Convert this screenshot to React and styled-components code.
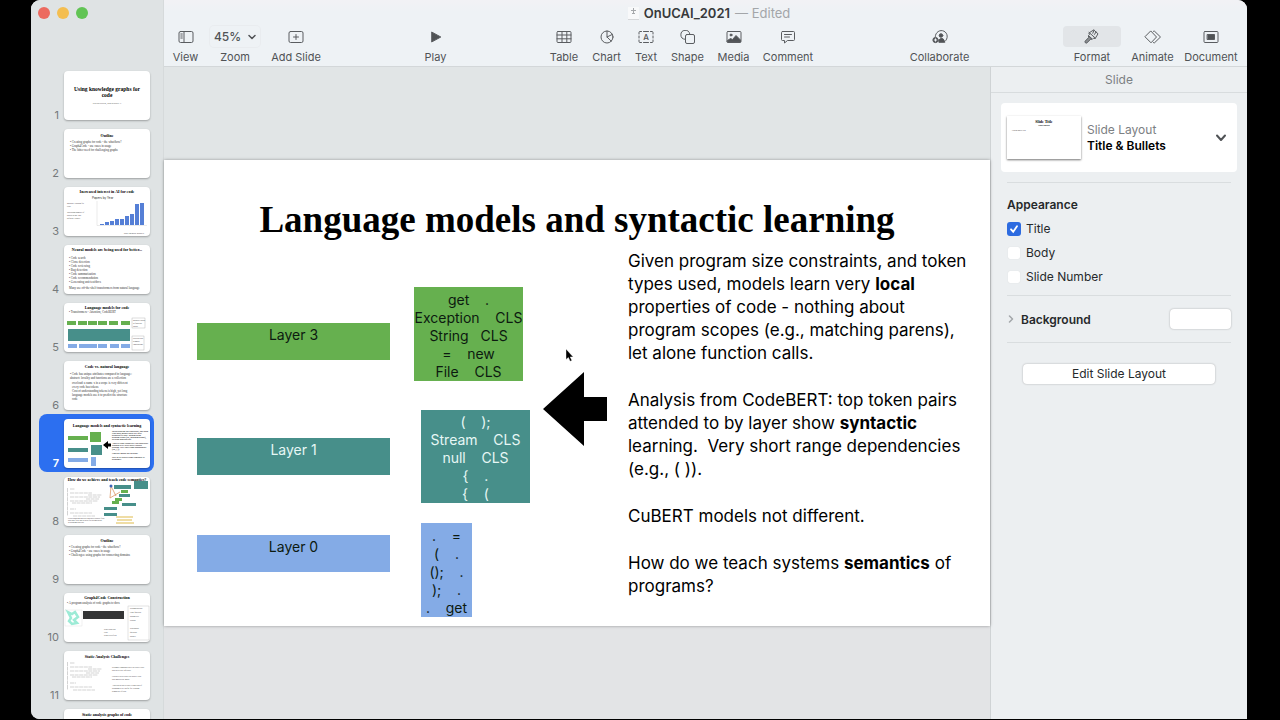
import React, { useState } from 'react'
import styled, { createGlobalStyle } from 'styled-components'

const GlobalStyle = createGlobalStyle`
    * {
        box-sizing: border-box;
    }
    body {
        margin: 0;
        background: #000;
        font-family: Inter, "Liberation Sans", sans-serif;
        font-size: 12px;
        color: #26292b;
    }
    button, input {
        font: inherit;
        color: inherit;
    }
`
const Window = styled.div`
    display: flex;
    height: 100vh;
    margin: 0 33px 0 31px;
    border-bottom: 1px solid #000;
    border-radius: 9px 9px 0 9px;
    background: #dfe3e4;
    overflow: hidden;
`
const Sidebar = styled.nav`
    width: 133px;
    flex: none;
    display: flex;
    flex-direction: column;
    background: #dfe3e4;
    border-right: 1px solid #d6dadb;
    overflow: hidden;
`
const Lights = styled.div`
    display: flex;
    gap: 7px;
    padding: 7px 0 0 7px;
    height: 66px;
    flex: none;
`
const Light = styled.button`
    width: 12px;
    height: 12px;
    padding: 0;
    border: none;
    border-radius: 50%;
    background: ${props => props.$color};
`
const ThumbList = styled.ol`
    list-style: none;
    margin: 0;
    padding: 0 9px 0 8px;
`
const ThumbButton = styled.button`
    display: flex;
    align-items: flex-end;
    justify-content: flex-end;
    gap: 5px;
    width: 100%;
    height: 58px;
    padding: 5px 4px 4px;
    border: none;
    border-radius: 8px;
    background: ${props => props.$active ? '#2c6ff0' : 'transparent'};
    color: ${props => props.$active ? '#fff' : '#75797b'};
    font-weight: ${props => props.$active ? 600 : 400};
    font-size: 11px;
    line-height: 10px;
`
const Thumb = styled.span`
    display: block;
    width: 86px;
    height: 49px;
    border-radius: 4px;
    background: #fff;
    box-shadow: 0 1px 2px rgba(0, 0, 0, .3);
    overflow: hidden;
    svg {
        display: block;
    }
`
const Main = styled.div`
    flex: 1;
    min-width: 0;
    display: flex;
    flex-direction: column;
`
const Header = styled.header`
    height: 67px;
    flex: none;
    background: linear-gradient(#f2f2f5, #eef2f5 12px);
    border-bottom: 1px solid #d3d7d9;
`
const DocTitle = styled.h1`
    display: flex;
    justify-content: center;
    align-items: center;
    gap: 5px;
    height: 26px;
    margin: 0;
    padding-left: 7px;
    font-size: 13px;
    font-weight: 600;
    color: #37393b;
    span {
        font-weight: 400;
        color: #a3a6a9;
    }
`
const Toolbar = styled.div`
    display: flex;
    padding: 0 9px;
`
const Tools = styled.div`
    display: flex;
    gap: ${props => props.$gap || 16}px;
`
const Spacer = styled.div`
    flex: ${props => props.$grow} 1 0;
`
const Tool = styled.button`
    display: flex;
    flex-direction: column;
    align-items: center;
    gap: 2px;
    width: ${props => props.$w}px;
    padding: 0;
    border: none;
    background: none;
    color: #505356;
    font-size: 11px;
    line-height: 16px;
    white-space: nowrap;
`
const Face = styled.span`
    display: flex;
    align-items: center;
    justify-content: center;
    gap: 7px;
    width: 100%;
    height: 21px;
    border-radius: 4px;
    font-size: 12px;
    font-weight: 500;
    background: ${props => props.$on ? '#e2e5e8' : 'transparent'};
    box-shadow: ${props => props.$framed ? '0 0 0 1px #e9ecef' : 'none'};
    svg {
        flex: none;
    }
`
const Workspace = styled.div`
    flex: 1;
    min-height: 0;
    display: flex;
`
const Canvas = styled.main`
    flex: 1;
    min-width: 0;
    display: flex;
    flex-direction: column;
    justify-content: center;
    background: linear-gradient(#e1e5e6 50%, #e3e4e6 80%);
`
const Slide = styled.article`
    position: relative;
    min-height: 466px;
    padding-top: 39px;
    background: #fff;
    box-shadow: 0 0 3px rgba(0, 0, 0, .35);
    color: #000;
`
const SlideTitle = styled.h2`
    margin: 0;
    height: 51px;
    text-align: center;
    white-space: nowrap;
    font-family: "Liberation Serif", serif;
    font-size: 37px;
    line-height: 42px;
    font-weight: 700;
`
const SlideBody = styled.div`
    display: flex;
    flex-direction: column;
    gap: 24px;
    padding-left: 464px;
    font-size: 17px;
    line-height: 23px;
    white-space: pre;
    p {
        margin: 0;
    }
`
/* a shape that the author dropped somewhere on the slide */
const Shape = styled.div`
    position: absolute;
    left: ${props => props.$x}px;
    top: ${props => props.$y}px;
    width: ${props => props.$w}px;
    height: ${props => props.$h}px;
    padding-top: ${props => props.$pad || 3}px;
    background: ${props => props.$fill};
    color: ${props => props.$ink || '#0c1a10'};
    font-size: 14px;
    line-height: 18px;
    text-align: center;
    white-space: pre;
`
const Arrow = styled.svg`
    position: absolute;
    left: 379px;
    top: 211px;
`
const Pointer = styled.svg`
    position: absolute;
    left: 401px;
    top: 188px;
`
const Inspector = styled.aside`
    width: 257px;
    flex: none;
    background: #eceff1;
    border-left: 1px solid #cfd3d5;
`
const InspectorTitle = styled.h2`
    margin: 0;
    height: 26px;
    border-bottom: 1px solid #d8dcde;
    text-align: center;
    font-size: 12px;
    line-height: 26px;
    font-weight: 400;
    color: #7c8083;
`
const LayoutCard = styled.button`
    display: flex;
    align-items: center;
    gap: 6px;
    width: calc(100% - 20px);
    height: 69px;
    margin: 10px;
    padding: 0 10px 0 6px;
    border: none;
    border-radius: 4px;
    background: #fff;
    text-align: left;
    line-height: 16px;
`
const LayoutPreview = styled.span`
    width: 74px;
    height: 43px;
    background: #fff;
    box-shadow: 0 1px 2px rgba(0, 0, 0, .55);
    svg {
        display: block;
    }
`
const LayoutName = styled.span`
    flex: 1;
    color: #7c8083;
    strong {
        display: block;
        font-weight: 600;
        color: #000;
    }
`
const Section = styled.section`
    margin: 0 16px;
    border-top: 1px solid #d9dddf;
`
const Appearance = styled.fieldset`
    display: flex;
    flex-direction: column;
    gap: 8px;
    margin: 0;
    padding: 14px 0 10px;
    border: none;
    line-height: 16px;
    legend {
        float: left;
        padding: 0;
        font-weight: 600;
    }
`
const Check = styled.label`
    display: flex;
    align-items: center;
    gap: 6px;
    padding-left: 1px;
`
const Box = styled.input`
    appearance: none;
    width: 12px;
    height: 12px;
    margin: 0;
    border-radius: 2px;
    background: #fff;
    box-shadow: 0 0 1px rgba(0, 0, 0, .15);
    &:checked {
        background: #2d6be0 url("data:image/svg+xml,%3Csvg xmlns='http://www.w3.org/2000/svg' viewBox='0 0 12 12'%3E%3Cpath d='M3 6.3l2.2 2.4L9 3.2' fill='none' stroke='white' stroke-width='1.8' stroke-linecap='round'/%3E%3C/svg%3E");
        box-shadow: 0 0 0 1px #2d6be0;
    }
`
const BackgroundRow = styled.div`
    display: flex;
    align-items: center;
    justify-content: space-between;
    height: 46px;
`
const Disclosure = styled.button`
    display: flex;
    align-items: center;
    gap: 7px;
    padding: 0 0 0 1px;
    border: none;
    background: none;
    font-weight: 600;
`
const PushButton = styled.button`
    width: ${props => props.$w};
    height: 20px;
    padding: 0;
    border: none;
    border-radius: 4px;
    background: #fff;
    box-shadow: 0 0 2px rgba(0, 0, 0, .3);
    line-height: 20px;
`
const EditRow = styled.div`
    padding: 21px 16px;
`

const green = '#66b04f'
const teal = '#478f8a'
const blue = '#84abe6'

const Icon = ({ w = 16, h = 14, children }) => (
    <svg width={w} height={h} viewBox={`0 0 ${w} ${h}`} fill="none" stroke="#5a5d60" strokeWidth="1" strokeLinecap="round" strokeLinejoin="round" aria-hidden="true">
        {children}
    </svg>
)
const Chevron = ({ w, h, d, color, weight }) => (
    <svg width={w} height={h} viewBox={`0 0 ${w} ${h}`} fill="none" stroke={color} strokeWidth={weight} strokeLinecap="round" strokeLinejoin="round" aria-hidden="true">
        <path d={d} />
    </svg>
)

const icons = {
    view: <Icon><rect x="1" y="1.5" width="14" height="11" rx="1.5" /><path d="M6 1.5v11M2.8 4h1.5M2.8 6h1.5M2.8 8h1.5" /></Icon>,
    add: <Icon><rect x="1" y="1.5" width="14" height="11" rx="1.5" /><path d="M8 4.5v5M5.5 7h5" /></Icon>,
    play: <Icon w={12} h={12}><path d="M2 1.2L10.8 6 2 10.8z" fill="#505356" /></Icon>,
    table: <Icon><rect x="1" y="1.5" width="14" height="11" rx="1" /><path d="M1 5h14M1 8.8h14M6 1.5v11M10.8 1.5v11" /></Icon>,
    chart: <Icon><circle cx="8" cy="7" r="6" /><path d="M8 1v6l4.3 4.2M8 7l5.4-2.6" /></Icon>,
    text: (
        <Icon>
            <path d="M1 4V2.500a1 1 0 0 1 1-1h1.500M12.500 1.500H14a1 1 0 0 1 1 1V4M15 10v1.500a1 1 0 0 1-1 1h-1.500M3.500 12.500H2a1 1 0 0 1-1-1V10M5.500 1.500h5M5.500 12.500h5M1 6v2M15 6v2" />
            <text x="8" y="10" textAnchor="middle" fontSize="8" fill="#505356" stroke="none">A</text>
        </Icon>
    ),
    shape: <Icon><path d="M5 9.300A4.500 4.500 0 1 1 9.800 4" /><rect x="5.500" y="4.500" width="9" height="9" rx="1.500" /></Icon>,
    media: (
        <Icon>
            <rect x="1" y="1.500" width="14" height="11" rx="1" />
            <circle cx="5" cy="5" r="1" fill="#505356" />
            <path d="M1.500 10.500l3-2 2 1L10 5.500l4.500 4.500v2h-13z" fill="#505356" />
        </Icon>
    ),
    comment: <Icon><path d="M2.500 1.500h11a1 1 0 0 1 1 1v7a1 1 0 0 1-1 1H7.500L4.500 13v-2.500h-2a1 1 0 0 1-1-1v-7a1 1 0 0 1 1-1zM4.500 4.500h7M4.500 7h5" /></Icon>,
    collab: (
        <Icon>
            <path d="M3.300 6.500A6 6 0 1 1 13 11.300" />
            <circle cx="9" cy="5.500" r="1.800" fill="#505356" />
            <path d="M6.800 12a2.600 2.600 0 0 1 5.400-1.500l.5 1.500z" fill="#505356" />
            <circle cx="3.500" cy="10" r="2.600" fill="#505356" />
            <path d="M3.500 8.800v2.400M2.300 10h2.400" stroke="#eef2f5" />
        </Icon>
    ),
    format: (
        <Icon h={15}>
            <path d="M10 1.200l4 3.600-3 5-1.200-.9-1.300 1.300-4-3.600 1.200-1.400-.7-.8z" />
            <path d="M5 3.400l6.200 5.600M10 1.200l-1.200 3M12 3l-1.500 2.400" />
            <path d="M4.700 7.200l3.200 3-1.600.3-3.200 3.200a1.200 1.200 0 0 1-1.800-1.700l3.100-3.200z" fill="#8b8e91" />
        </Icon>
    ),
    animate: <Icon w={18} h={14}><path d="M7 1.200L12.500 7 7 12.800 1.200 7z" /><path d="M9.500 1.300l1-.1L16.500 7l-6 5.800-1-.2" /></Icon>,
    document: <Icon><rect x="1" y="1.500" width="14" height="11" rx="1" /><rect x="4.500" y="4.500" width="7" height="5" fill="#505356" /></Icon>,
}

const serif = '"Liberation Serif", serif'
const Art = ({ title, top = 6, children }) => (
    <svg width="86" height="49" viewBox="0 0 86 49" fontSize="3" fill="#333" aria-hidden="true">
        <text x="43" y={top} textAnchor="middle" fontFamily={serif} fontWeight="700" fontSize="4" fill="#000">{title}</text>
        {children}
    </svg>
)
const Lines = ({ x, y, step = 4, size = 3, lines }) => lines.map((line, i) => (
    <text key={i} x={x} y={y + i * step} fontSize={size} fontFamily={serif}>{line}</text>
))
const Bars = ({ items }) => items.map(([x, y, w, h, fill], i) => (
    <rect key={i} x={x} y={y} width={w} height={h} fill={fill} />
))
// rough code listing used on a couple of the slides
const Listing = () => (
    <g stroke="#b5b5b5" strokeWidth=".6">
        <path d="M3.500 11v28M6 12h5M6 16h22M24 18h14M6 20h30M22 22h13M6 24h28M8 26h20M6 32h6M6 36h22M9 39h22" strokeDasharray="4 .6" />
    </g>
)

const yearBars = [1, 3, 4, 6, 6, 9, 11, 21, 22]
const slides = [
    <svg width="86" height="49" viewBox="0 0 86 49" textAnchor="middle" fontFamily={serif} aria-hidden="true">
        <g fontWeight="700" fontSize="6">
            <text x="43" y="20" fontSize="5.500">Using knowledge graphs for</text>
            <text x="43" y="26" fontSize="5.500">code</text>
        </g>
        <text x="43" y="33" fontSize="2" fill="#444">Kavitha Srinivas, IBM Research AI</text>
    </svg>,
    <Art title="Outline" top={8}>
        <Lines x={6} y={14} lines={['• Creating graphs for code - the what/how?', '• Graph4Code - use cases in usage', '• The bitter need for challenging graphs']} />
    </Art>,
    <Art title="Increased interest in AI for code">
        <Lines x={3} y={17} step={3} size={2} lines={['Machine learning for', 'code', '', 'Increasing number of', 'papers in ML and', 'software venues']} />
        <text x="28" y="12">Papers by Year</text>
        <path d="M33 14v24.500h50" stroke="#ccc" strokeWidth=".4" fill="none" />
        <Bars items={yearBars.map((h, i) => [36 + i * 5, 38 - h, 4, h, '#557fd6'])} />
        <Lines x={60} y={47} size={2} lines={['https://ml4code.github.io']} />
    </Art>,
    <Art title="Neural models are being used for better...">
        <Lines x={5} y={14} lines={['• Code search', '• Clone detection', '• Code reviewing', '• Bug detection', '• Code summarization', '• Code recommendation', '• Generating unit test/docs']} />
        <Lines x={5} y={44} lines={['Many use off-the-shelf transformers from natural language']} />
    </Art>,
    <Art title="Language models for code">
        <Lines x={5} y={10} lines={['• Transformers - Attention, CodeBERT']} />
        <Bars items={[3, 14, 24, 34, 45, 57].map(x => [x, 18, 9, 4, green])} />
        <Bars items={[4, 15, 24, 34, 46, 57].map(x => [x, 41, 9, 4, blue])} />
        <Bars items={[[4, 26, 62, 12, teal]]} />
        <rect x="68" y="15" width="13" height="10" fill="none" stroke="#aaa" strokeWidth=".4" />
        <rect x="68" y="33" width="12" height="14" fill="none" stroke="#aaa" strokeWidth=".4" />
        <Lines x={69} y={18} step={3} size={2} lines={['Masked tokens', 'in function', 'inputs']} />
        <Lines x={69} y={36} step={3} size={2} lines={['Position and', 'segment', 'embeddings']} />
    </Art>,
    <Art title="Code vs. natural language" top={7}>
        <Lines x={6} y={14} lines={['• Code has unique attributes compared to language:', '   abstract: locality and functions are a collection']} />
        <Lines x={8} y={23} lines={['overload: a name x in a scope is very different', 'every code has tokens']} />
        <Lines x={8} y={31} lines={['Cost of understanding tokens is high, yet long', 'language models use it to predict the structure', 'code']} />
    </Art>,
    <Art title="Language models and syntactic learning" top={8}>
        <Bars items={[[4, 17, 20, 4, green], [4, 29, 20, 4, teal], [4, 39, 20, 4, blue], [26, 13, 11, 10, green], [27, 26, 11, 10, teal], [27, 38, 5, 9, blue]]} />
        <path d="M39 26l5-4v2.500h3v3h-3V30z" fill="#000" />
        <Lines x={48} y={13} step={2} size={2} lines={['Given program size constraints, and token', 'types used, models learn very local', 'properties of code - nothing about', 'program scopes (e.g., matching parens),', 'let alone function calls.', '', 'Analysis from CodeBERT: top token pairs', 'attended to by layer show syntactic', 'learning. Very short range dependencies', '(e.g., ( )).', '', 'CuBERT models not different.', '', 'How do we teach systems semantics of', 'programs?']} />
    </Art>,
    <Art title="How do we achieve and teach code semantics?" top={4}>
        <Listing />
        <Bars items={[[50, 8, 17, 4, teal], [70, 4, 14, 8, teal], [57, 13, 7, 3, green], [55, 17, 11, 3, teal], [51, 21, 7, 3, green], [48, 24, 7, 3, green], [58, 26, 14, 3, teal], [40, 30, 13, 3, teal], [40, 36, 13, 3, teal]]} />
        <path d="M47 9l-1 12M47 9l5 10M46 21l10-6" stroke="#d98850" strokeWidth=".7" />
        <circle cx="47" cy="9" r="1.500" fill="#3a62b8" />
        <path d="M52 40h17M53 43h15M52 46h18" stroke="#efdda5" strokeWidth="2" />
        <Lines x={4} y={42} step={2} size={2} lines={['Good program analysis abstracts control flow', 'and data flow and is used for optimization', '           in program analysis']} />
    </Art>,
    <Art title="Outline" top={7}>
        <Lines x={5} y={13} lines={['• Creating graphs for code - the what/how?', '• Graph4Code - use cases in usage', '• Challenges: using graphs for connecting domains']} />
    </Art>,
    <Art title="Graph4Code Construction">
        <Lines x={3} y={11} lines={['• A program analysis of code graphs to docs']} />
        <path d="M4 19l4 2 3-2 3 5-4 3 3 3-5 1-3-3 2-3z" fill="none" stroke="#9debd6" strokeWidth="2.500" />
        <rect x="1" y="17" width="17" height="16" fill="none" stroke="#ddd" strokeWidth=".4" />
        <Bars items={[[19, 18, 41, 8, '#343536']]} />
        <rect x="64" y="13" width="21" height="34" fill="none" stroke="#bbb" strokeWidth=".4" />
        <Lines x={66} y={16} size={2} lines={['Documentation', 'class function', 'parameters', 'returns', '', 'Discussion', 'question', 'answer']} />
        <Lines x={40} y={37} step={3} size={2} lines={['Static analysis', 'code', 'Stack Overflow']} />
    </Art>,
    <Art title="Static Analysis Challenges" top={7}>
        <Listing />
        <Lines x={48} y={17} step={3} size={2} lines={['Dynamic languages have no static types', 'and need type inference', '', 'Libraries called have no source code', 'and imports are many', '', 'Analysis needs to scale to millions of', 'programs to be useful for learning', 'semantics of code']} />
    </Art>,
    <Art title="Static analysis graphs of code" top={7} />,
]

const ToolItem = ({ label, width, icon, on }) => (
    <Tool $w={width}>
        <Face $on={on}>{icon}</Face>
        {label}
    </Tool>
)

const App = () => {
    const [active, setActive] = useState(6)
    return (
        <>
            <GlobalStyle />
            <Window>
                <Sidebar aria-label="Slides">
                    <Lights>
                        <Light $color="#ec6a5f" aria-label="Close" />
                        <Light $color="#f4be50" aria-label="Minimize" />
                        <Light $color="#61c454" aria-label="Full screen" />
                    </Lights>
                    <ThumbList>
                        {slides.map((art, i) => (
                            <li key={i}>
                                <ThumbButton $active={i === active} onClick={() => setActive(i)}>
                                    {i + 1}
                                    <Thumb>{art}</Thumb>
                                </ThumbButton>
                            </li>
                        ))}
                    </ThumbList>
                </Sidebar>
                <Main>
                    <Header>
                        <DocTitle>
                            <svg width="11" height="14" viewBox="0 0 11 14" aria-hidden="true">
                                <rect width="11" height="13" y="1" fill="#f8f9fa" />
                                <path d="M0 13.500h11" stroke="#d5d7d9" />
                                <path d="M3 4.500h5M5.500 2v5.500M4 7.500h3" stroke="#a5a8ab" />
                            </svg>
                            OnUCAI_2021 <span>— Edited</span>
                        </DocTitle>
                        <Toolbar>
                            <Tools $gap={12}>
                                <ToolItem label="View" width={25} icon={icons.view} />
                                <Tool $w={50}>
                                    <Face $framed>
                                        45%
                                        <Chevron w={8} h={6} d="M1 1.500l3 3 3-3" color="#505356" weight={1.5} />
                                    </Face>
                                    Zoom
                                </Tool>
                                <ToolItem label="Add Slide" width={48} icon={icons.add} />
                            </Tools>
                            <Spacer $grow={105} />
                            <ToolItem label="Play" width={21} icon={icons.play} />
                            <Spacer $grow={105} />
                            <Tools>
                                <ToolItem label="Table" width={26} icon={icons.table} />
                                <ToolItem label="Chart" width={27} icon={icons.chart} />
                                <ToolItem label="Text" width={20} icon={icons.text} />
                                <ToolItem label="Shape" width={31} icon={icons.shape} />
                                <ToolItem label="Media" width={29} icon={icons.media} />
                                <ToolItem label="Comment" width={48} icon={icons.comment} />
                            </Tools>
                            <Spacer $grow={99} />
                            <ToolItem label="Collaborate" width={57} icon={icons.collab} />
                            <Spacer $grow={95} />
                            <Tools $gap={12}>
                                <ToolItem label="Format" width={58} icon={icons.format} on />
                                <ToolItem label="Animate" width={39} icon={icons.animate} />
                                <ToolItem label="Document" width={54} icon={icons.document} />
                            </Tools>
                        </Toolbar>
                    </Header>
                    <Workspace>
                        <Canvas>
                            <Slide>
                                <SlideTitle>Language models and syntactic learning</SlideTitle>
                                <SlideBody>
                                    <p>
                                        Given program size constraints, and token<br />
                                        types used, models learn very <b>local</b><br />
                                        properties of code - nothing about<br />
                                        program scopes (e.g., matching parens),<br />
                                        let alone function calls.
                                    </p>
                                    <p>
                                        Analysis from CodeBERT: top token pairs<br />
                                        attended to by layer show <b>syntactic</b><br />
                                        {'learning.  Very short range dependencies'}<br />
                                        (e.g., ( )).
                                    </p>
                                    <p>CuBERT models not different.</p>
                                    <p>
                                        How do we teach systems <b>semantics</b> of<br />
                                        programs?
                                    </p>
                                </SlideBody>
                                <Shape $x={33} $y={163} $w={193} $h={37} $fill={green}>Layer 3</Shape>
                                <Shape $x={33} $y={278} $w={193} $h={37} $fill={teal} $ink="#e6f7f5">Layer 1</Shape>
                                <Shape $x={33} $y={375} $w={193} $h={37} $fill={blue}>Layer 0</Shape>
                                <Shape $x={250} $y={127} $w={109} $h={94} $pad={4} $fill={green}>
                                    {'get    .\nException    CLS\nString   CLS\n=    new\nFile    CLS'}
                                </Shape>
                                <Shape $x={257} $y={250} $w={109} $h={93} $fill={teal} $ink="#e6f7f5">
                                    {'(    );\nStream    CLS\nnull    CLS\n{    .\n{    ('}
                                </Shape>
                                <Shape $x={257} $y={363} $w={51} $h={94} $pad={4} $fill={blue}>
                                    {'.    =\n(    .\n();    .\n);    .\n.    get'}
                                </Shape>
                                <Arrow width="64" height="75" viewBox="0 0 64 75" aria-hidden="true">
                                    <path d="M0 38L41 1v25h23v24H41v25z" />
                                </Arrow>
                                <Pointer width="9" height="14" viewBox="0 0 9 14" aria-hidden="true">
                                    <path d="M1 1v10.500l2.400-2 1.700 3.800 1.800-.8-1.700-3.600h3z" stroke="#fff" strokeWidth=".4" />
                                </Pointer>
                            </Slide>
                        </Canvas>
                        <Inspector>
                            <InspectorTitle>Slide</InspectorTitle>
                            <LayoutCard>
                                <LayoutPreview>
                                    <svg width="74" height="43" viewBox="0 0 74 43" fontFamily={serif} aria-hidden="true">
                                        <text x="37" y="7" textAnchor="middle" fontSize="4" fontWeight="700">Slide Title</text>
                                        <text x="37" y="10" textAnchor="middle" fontSize="2" fontWeight="700">Slide Subtitle</text>
                                        <text x="5" y="15" fontSize="2">• Slide bullet text</text>
                                    </svg>
                                </LayoutPreview>
                                <LayoutName>
                                    Slide Layout
                                    <strong>Title &amp; Bullets</strong>
                                </LayoutName>
                                <Chevron w={12} h={8} d="M2 1.500l4 4.500 4-4.500" color="#505356" weight={2} />
                            </LayoutCard>
                            <Section>
                                <Appearance>
                                    <legend>Appearance</legend>
                                    <Check><Box type="checkbox" defaultChecked />Title</Check>
                                    <Check><Box type="checkbox" />Body</Check>
                                    <Check><Box type="checkbox" />Slide Number</Check>
                                </Appearance>
                            </Section>
                            <Section>
                                <BackgroundRow>
                                    <Disclosure>
                                        <Chevron w={6} h={8} d="M1.500 1l3 3-3 3" color="#a3a6a9" weight={1.5} />
                                        Background
                                    </Disclosure>
                                    <PushButton $w="61px" aria-label="Background colour" />
                                </BackgroundRow>
                            </Section>
                            <Section>
                                <EditRow>
                                    <PushButton $w="100%">Edit Slide Layout</PushButton>
                                </EditRow>
                            </Section>
                        </Inspector>
                    </Workspace>
                </Main>
            </Window>
        </>
    )
}

export default App
